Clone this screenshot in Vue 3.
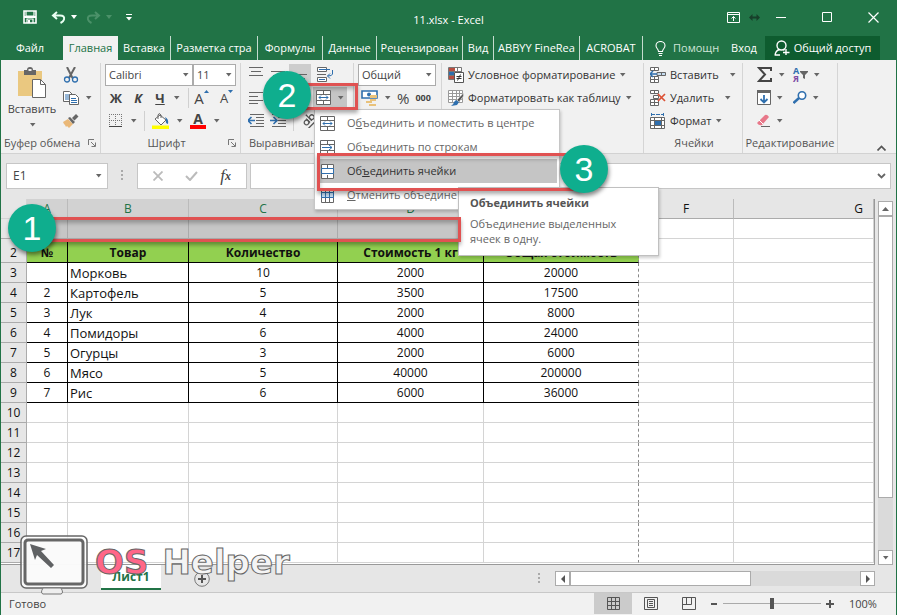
<script setup>
import { ref } from 'vue'

const tabs = ['Вставка', 'Разметка стра', 'Формулы', 'Данные', 'Рецензирован', 'Вид', 'ABBYY FineRea', 'ACROBAT']
const columns = ['A', 'B', 'C', 'D', 'E', 'F', 'G']
const goods = [
  ['', 'Морковь', '10', '2000', '20000'],
  ['2', 'Картофель', '5', '3500', '17500'],
  ['3', 'Лук', '4', '2000', '8000'],
  ['4', 'Помидоры', '6', '4000', '24000'],
  ['5', 'Огурцы', '3', '2000', '6000'],
  ['6', 'Мясо', '5', '40000', '200000'],
  ['7', 'Рис', '6', '6000', '36000']
]
const emptyRows = [10, 11, 12, 13, 14, 15, 16, 17]
const zoom = ref(50)
</script>

<template>
  <div class="window">
    <svg class="sprite" aria-hidden="true">
      <symbol id="arrow" viewBox="0 0 7 4"><path d="M1 0h5.500L3.700 3.500z" fill="#666" /></symbol>
      <symbol id="launcher" viewBox="0 0 8 8"><path d="M.5 6V.5H6M3 3l4 4M7.500 3.500v4h-4" fill="none" stroke="#777" /></symbol>
      <symbol id="merge-center" viewBox="0 0 16 15">
        <path d="M.5.5h14v14H.5zM.5 4.500h14M.5 10.500h14M7.500 0v4M7.500 11v4" fill="#fff" stroke="#666" />
        <path d="M3 7.500h9M5 5.500l-2 2 2 2M10 5.500l2 2-2 2" fill="none" stroke="#2f6fae" />
      </symbol>
      <symbol id="merge-across" viewBox="0 0 16 15">
        <path d="M.5.5h14v14H.5zM.5 4.500h14M.5 10.500h14M7.500 0v4M7.500 11v4" fill="#fff" stroke="#666" />
        <path d="M2 7.500h10M9 5l3 2.500L9 10" fill="none" stroke="#2f6fae" />
      </symbol>
      <symbol id="merge-cells" viewBox="0 0 16 15">
        <path d="M1.500.5h12v14h-12zM7.500 0v4M7.500 11v4" fill="#fff" stroke="#666" />
        <path d="M1.500 4.500h12v5h-12z" fill="#fff" stroke="#2f6fae" />
      </symbol>
      <symbol id="unmerge" viewBox="0 0 16 15">
        <path d="M1.500.5h12v14h-12zM5.500 0v15M9.500 0v15" fill="#fff" stroke="#666" />
        <path d="M1.500 4.500h12v5h-12zM5.500 4.500v5M9.500 4.500v5" fill="#c5dcf1" stroke="#2f6fae" />
      </symbol>
    </svg>

    <header class="titlebar">
      <div class="quick">
        <button aria-label="Сохранить"><svg width="14" height="14" viewBox="0 0 14 14"><path d="M1 1h12v12H1z" fill="none" stroke="#fff" stroke-width="1.600" /><path d="M3 1v5h8V1M4 13V9h6v4" fill="none" stroke="#fff" stroke-width="1.200" /><path d="M1 6h12v2H1zM5 10h2v3H5z" fill="#fff" /></svg></button>
        <button class="undo" aria-label="Отменить"><svg width="15" height="13" viewBox="0 0 15 13"><path d="M6 1L2 4.500 6 8M2 4.500h7q5 0 4 4-.5 2-3.500 3.500" fill="none" stroke="#e8fff2" stroke-width="2" /></svg><svg width="6" height="4" viewBox="0 0 6 4"><path d="M0 0h6L3 4z" fill="#fff" /></svg></button>
        <button class="redo" aria-label="Повторить"><svg width="15" height="13" viewBox="0 0 15 13"><path d="M9 1l4 3.500L9 8M13 4.500H6q-5 0-4 4Q2.500 10.500 5.500 12" fill="none" stroke="#4b9169" stroke-width="2" /></svg><svg width="6" height="4" viewBox="0 0 6 4"><path d="M0 0h6L3 4z" fill="#4b9169" /></svg></button>
        <button aria-label="Настройка панели"><svg width="6" height="7" viewBox="0 0 6 7"><path d="M0 0h6v1H0zM0 3h6L3 6.500z" fill="#fff" /></svg></button>
      </div>
      <h1>11.xlsx - Excel</h1>
      <div class="winctl">
        <button aria-label="Параметры ленты"><svg width="13" height="11" viewBox="0 0 13 11"><path d="M.5.5h12v10H.5zM.5 2.500h12M6.500 9V4.500M4.500 6.500l2-2 2 2" fill="none" stroke="#fff" /></svg></button>
        <svg width="11" height="7" viewBox="0 0 11 7"><path d="M0 3.500L3.500 0v2.500h4V0L11 3.500 7.500 7V4.500h-4V7z" fill="#173f2a" /></svg>
        <button aria-label="Свернуть"><svg width="10" height="10" viewBox="0 0 10 10"><path d="M0 5.500h10" stroke="#fff" /></svg></button>
        <button class="max" aria-label="Развернуть"><svg width="10" height="10" viewBox="0 0 10 10"><path d="M.5.5h9v9h-9z" fill="none" stroke="#fff" /></svg></button>
        <button class="close" aria-label="Закрыть"><svg width="11" height="11" viewBox="0 0 11 11"><path d="M.5.5l10 10M10.500.5l-10 10" stroke="#fff" stroke-width="1.200" /></svg></button>
      </div>
    </header>

    <nav class="tabs">
      <button class="file">Файл</button>
      <button class="active">Главная</button>
      <button v-for="t in tabs" :key="t" class="tab">{{ t }}</button>
      <button class="help"><svg width="11" height="15" viewBox="0 0 11 15"><path d="M3.500 10.500C3.500 8 1 7.500 1 4.800a4.500 4.300 0 0 1 9 0C10 7.500 7.500 8 7.500 10.500zM3.500 12.500h4M4 14.500h3" fill="none" stroke="#fff" stroke-width="1.100" /></svg><span>Помощн</span></button>
      <button class="login">Вход</button>
      <button class="share"><svg width="16" height="16" viewBox="0 0 16 16"><circle cx="7.500" cy="5.500" r="4.500" fill="none" stroke="#fff" stroke-width="1.400" /><path d="M1 15.500q.5-5 4.500-6M1 15h5M12 9v6M9 12.500h6.500M9 9.500l1.500.5" fill="none" stroke="#fff" stroke-width="1.400" /></svg>Общий доступ</button>
    </nav>

    <section class="ribbon">
      <div class="group clipboard">
        <div class="tools split">
          <button class="paste">
            <svg width="30" height="32" viewBox="0 0 30 32"><path d="M1 4h24v25H1z" fill="#eac880" /><path d="M7 3h3q0-3 3-3t3 3h3v5H7z" fill="#666" /><path d="M11.500 2h3v2h-3z" fill="#eee" /><path d="M15.500 12.500h8l5 5v13h-13z" fill="#fff" stroke="#666" /><path d="M23.500 12.500v5h5" fill="none" stroke="#666" /></svg>
            <span>Вставить</span>
            <svg class="arr"><use href="#arrow" /></svg>
          </button>
          <div class="stack">
            <button class="row" aria-label="Вырезать"><svg width="16" height="16" viewBox="0 0 16 16"><path d="M4 0l5.500 11M12 0L6 11" stroke="#666" stroke-width="2" /><circle cx="4" cy="12.500" r="2.500" fill="none" stroke="#2f6fae" stroke-width="1.300" /><circle cx="12" cy="12.500" r="2.500" fill="none" stroke="#2f6fae" stroke-width="1.300" /></svg></button>
            <button class="row" aria-label="Копировать"><svg width="16" height="14" viewBox="0 0 16 14"><path d="M.5.5h6l3 3v7h-9z" fill="#fff" stroke="#666" /><path d="M2 4h5M2 6h5M2 8h5" stroke="#2f6fae" /><path d="M6.500 3.500h6l3 3v7h-9z" fill="#fff" stroke="#666" /><path d="M8 7.500h5M8 9.500h6M8 11.500h6" stroke="#2f6fae" /></svg><svg class="arr"><use href="#arrow" /></svg></button>
            <button class="row" aria-label="Формат по образцу"><svg width="16" height="14" viewBox="0 0 16 14"><path d="M0 8l5-3 5 5-4 4-2-2-1 1-1-2-1-1z" fill="#eab878" /><path d="M5 4l2-1 5 5-2 2zM9 4l4-4 2.500 2.500-4 4z" fill="#666" /></svg></button>
          </div>
        </div>
        <footer><span>Буфер обмена</span><svg class="launch"><use href="#launcher" /></svg></footer>
      </div>

      <div class="group font">
        <div class="tools">
          <div class="row">
            <label class="combo face"><select aria-label="Шрифт"><option>Calibri</option></select><svg class="arr"><use href="#arrow" /></svg></label>
            <label class="combo size"><select aria-label="Размер"><option>11</option></select><svg class="arr"><use href="#arrow" /></svg></label>
          </div>
          <div class="row letters">
            <button class="b">Ж</button><button class="b i">К</button><button class="b u">Ч</button>
            <svg class="arr"><use href="#arrow" /></svg><i class="sep"></i>
            <button class="grow" aria-label="Увеличить">A<svg width="5" height="3" viewBox="0 0 5 3"><path d="M0 3h5L2.500 0z" fill="#2f6fae" /></svg></button>
            <button class="grow small" aria-label="Уменьшить">A<svg width="5" height="3" viewBox="0 0 5 3"><path d="M0 0h5L2.500 3z" fill="#2f6fae" /></svg></button>
          </div>
          <div class="row paint">
            <button aria-label="Границы"><svg width="14" height="13" viewBox="0 0 14 13"><path d="M.5 0v12M6.500 0v12M12.500 0v12M0 .5h13M0 6.500h13" stroke="#777" stroke-dasharray="1 1" /><path d="M0 12.500h13" stroke="#444" /></svg></button>
            <svg class="arr"><use href="#arrow" /></svg><i class="sep"></i>
            <button aria-label="Заливка"><svg width="17" height="16" viewBox="0 0 17 16"><path d="M3 6l5-4 6 5-5 5z" fill="#fff" stroke="#666" /><path d="M6 6V2q1-3 3 0v3" fill="none" stroke="#666" /><path d="M13 4q4 2 3 7-3-1-2-4z" fill="#2f6fae" /><path d="M0 12.500h17V16H0z" fill="#ff0" /></svg></button>
            <svg class="arr"><use href="#arrow" /></svg>
            <button class="color" aria-label="Цвет текста">А</button>
            <svg class="arr"><use href="#arrow" /></svg>
          </div>
        </div>
        <footer><span class="mid">Шрифт</span><svg class="launch"><use href="#launcher" /></svg></footer>
      </div>

      <div class="group align">
        <div class="tools">
          <div class="row">
            <button aria-label="По верхнему краю"><svg width="14" height="16" viewBox="0 0 14 16"><path d="M0 .5h14M2 4.500h10M0 8.500h14" stroke="#666" /></svg></button>
            <button aria-label="По середине"><svg width="14" height="16" viewBox="0 0 14 16"><path d="M0 4.500h14M2 8.500h10M0 12.500h14" stroke="#666" /></svg></button>
            <button class="on" aria-label="По нижнему краю"><svg width="14" height="16" viewBox="0 0 14 16"><path d="M0 7.500h14M2 11.500h10M0 15.500h14" stroke="#666" /></svg></button>
            <button aria-label="Перенос текста"><svg width="17" height="16" viewBox="0 0 17 16"><path d="M.5.5h9v4h-9zM.5 10.500h9v4h-9zM0 7.500h9" fill="#fff" stroke="#666" /><path d="M2 2.500h11M2 12.500h6M15.500 3v4q0 2-5 2M13 6.500L10.500 9l2.500 2.500" fill="none" stroke="#2f6fae" /></svg></button>
          </div>
          <div class="row">
            <button aria-label="По левому краю"><svg width="14" height="12" viewBox="0 0 14 12"><path d="M0 .5h14M0 4.500h9M0 8.500h14M0 11.500h9" stroke="#666" /></svg></button>
            <button aria-label="По центру"><svg width="14" height="12" viewBox="0 0 14 12"><path d="M0 .5h14M2 4.500h10M0 8.500h14" stroke="#666" /></svg></button>
            <button aria-label="По правому краю"><svg width="14" height="12" viewBox="0 0 14 12"><path d="M0 .5h14M5 4.500h9M0 8.500h14" stroke="#666" /></svg></button>
            <button class="merge" aria-label="Объединить"><svg width="16" height="15"><use href="#merge-center" /></svg><svg class="arr"><use href="#arrow" /></svg></button>
          </div>
          <div class="row">
            <button aria-label="Уменьшить отступ"><svg width="16" height="13" viewBox="0 0 16 13"><path d="M2 .5h14M8 3.500h8M8 6.500h8M8 9.500h8M2 12.500h14" stroke="#666" /><path d="M0 6.500h7M3.500 3L0 6.500 3.500 10" fill="none" stroke="#2f6fae" stroke-width="1.600" /></svg></button>
            <button aria-label="Увеличить отступ"><svg width="16" height="13" viewBox="0 0 16 13"><path d="M2 .5h14M8 3.500h8M8 6.500h8M8 9.500h8M2 12.500h14" stroke="#666" /><path d="M0 6.500h6M3.500 3L7 6.500 3.500 10" fill="none" stroke="#2f6fae" stroke-width="1.600" /></svg></button>
            <i class="sep"></i>
            <button class="orient" aria-label="Ориентация"><svg width="15" height="15" viewBox="0 0 15 15"><g transform="rotate(-45 7 7)" fill="none" stroke="#555" stroke-width="1.300"><circle cx="3.500" cy="7" r="2.300" /><path d="M6 4v5.500M8.500 1v8.500M0 12.500h14" /><circle cx="11" cy="7" r="2.300" /></g></svg></button>
          </div>
        </div>
        <footer><span>Выравнивание</span></footer>
      </div>

      <div class="group number">
        <div class="tools">
          <div class="row"><label class="combo fmt"><select aria-label="Формат числа"><option>Общий</option></select><svg class="arr"><use href="#arrow" /></svg></label></div>
          <div class="row">
            <button aria-label="Денежный формат"><svg width="17" height="16" viewBox="0 0 17 16"><path d="M1 1h15v7H1z" fill="#fff" stroke="#2f6fae" stroke-width="1.600" /><circle cx="8" cy="4.500" r="2" fill="#2f6fae" /><path d="M9 5h7v3H9zM9 9h6v2H9zM5 11h6v2H5zM8 14h7v2H8z" fill="#e9c27b" /></svg></button>
            <svg class="arr"><use href="#arrow" /></svg>
            <button class="pct">%</button><button class="zeros">000</button>
          </div>
        </div>
      </div>

      <div class="group styles">
        <div class="tools">
          <button class="row cmd"><svg width="16" height="16" viewBox="0 0 16 16"><path d="M.5.5h13v12H.5zM.5 4.500h13M.5 8.500h13M9.500.5v12" fill="#fff" stroke="#777" /><path d="M1 1h6v3H1zM1 9h5v3H1z" fill="#b94f42" /><path d="M1 5h5v3H1z" fill="#2f6fae" /><path d="M6.500 5.500h9v10h-9z" fill="#fff" stroke="#555" /><path d="M8.500 9.500h5M8.500 11.500h5M12.500 7.500l-3 6" stroke="#333" /></svg>Условное форматирование<svg class="arr"><use href="#arrow" /></svg></button>
          <button class="row cmd"><svg width="16" height="16" viewBox="0 0 16 16"><path d="M.5.5h14v12H.5zM.5 3.500h14M.5 6.500h14M.5 9.500h14M4.500.5v12M8.500.5v12M11.500.5v12" fill="#fff" stroke="#999" /><path d="M15.500 3L9 10l2 2 4.500-6z" fill="#555" stroke="#f1f1f1" stroke-width=".5" /><path d="M8 10l3 2-2 3-6 1q3-2 3-4z" fill="#2f6fae" /></svg>Форматировать как таблицу<svg class="arr"><use href="#arrow" /></svg></button>
        </div>
      </div>

      <div class="group cells">
        <div class="tools">
          <button class="row cmd"><svg width="16" height="16" viewBox="0 0 16 16"><path d="M.5.5h8v3h-8zM.5 12.500h8v3h-8zM.5 9.500h8v3h-8zM4.500 0v4M4.500 9v7" fill="#fff" stroke="#666" /><path d="M7 5.500h8.500v3H7zM11.500 5.500v3" fill="#c5dcf1" stroke="#666" /><path d="M0 7h7M3 4L0 7l3 3" fill="none" stroke="#2f6fae" stroke-width="1.500" /></svg>Вставить<svg class="arr far"><use href="#arrow" /></svg></button>
          <button class="row cmd"><svg width="16" height="16" viewBox="0 0 16 16"><path d="M.5.5h8v3h-8zM.5 9.500h8v6h-8zM.5 12.500h8M4.500 0v4M4.500 9v7M3.500 5.500h5v3h-5z" fill="#fff" stroke="#666" /><path d="M8 4l7 7M15 4l-7 7" stroke="#dc5135" stroke-width="1.700" /></svg>Удалить<svg class="arr far"><use href="#arrow" /></svg></button>
          <button class="row cmd"><svg width="16" height="16" viewBox="0 0 16 16"><path d="M.5 4.500h14v11H.5zM.5 7.500h14M.5 12.500h14M4.500 4v12M11.500 4v12" fill="#fff" stroke="#666" /><path d="M5 8h6v4H5z" fill="#2f6fae" /><path d="M1 1.500h13M1.500 0v3M13.500 0v3" stroke="#2f6fae" stroke-dasharray="4 1" /></svg>Формат<svg class="arr"><use href="#arrow" /></svg></button>
        </div>
        <footer><span class="mid">Ячейки</span></footer>
      </div>

      <div class="group edit">
        <div class="tools">
          <div class="row">
            <button aria-label="Сумма"><svg width="16" height="15" viewBox="0 0 16 15"><path d="M14 4V1H2l6 6.500L2 14h12v-3" fill="none" stroke="#444" stroke-width="2" /></svg><svg class="arr"><use href="#arrow" /></svg></button>
            <button aria-label="Сортировка" class="sort"><span><b>А</b><b>Я</b></span><svg width="8" height="8" viewBox="0 0 8 8"><path d="M0 0h8v1L5 4v4L3 7V4L0 1z" fill="#666" /></svg><svg class="arr"><use href="#arrow" /></svg></button>
          </div>
          <div class="row">
            <button aria-label="Заполнить"><svg width="14" height="15" viewBox="0 0 14 15"><path d="M.5.5h13v14H.5z" fill="#fff" stroke="#666" /><path d="M0 0h14v3H0z" fill="#666" /><path d="M7 5v7M3.500 9L7 12.500 10.500 9" fill="none" stroke="#2f6fae" stroke-width="1.800" /></svg><svg class="arr"><use href="#arrow" /></svg></button>
            <button aria-label="Найти"><svg width="14" height="13" viewBox="0 0 14 13"><circle cx="9" cy="4.500" r="3.700" fill="#fff" stroke="#2f6fae" stroke-width="1.600" /><path d="M6 7L.5 12" stroke="#2f6fae" stroke-width="2.400" /></svg><svg class="arr"><use href="#arrow" /></svg></button>
          </div>
          <div class="row">
            <button aria-label="Очистить"><svg width="14" height="13" viewBox="0 0 14 13"><path d="M0 9l8-8q2-1 4 2l-7 8q-3 1-5-2z" fill="#e8788a" /><path d="M2 6l4 4" stroke="#fff" /><path d="M4 12.500h9" stroke="#666" /></svg><svg class="arr"><use href="#arrow" /></svg></button>
          </div>
        </div>
        <footer><span class="mid">Редактирование</span></footer>
      </div>
      <div class="collapse"><button aria-label="Свернуть ленту"><svg width="9" height="6" viewBox="0 0 9 6"><path d="M.5 5.500l4-4 4 4" fill="none" stroke="#555" stroke-width="1.700" /></svg></button></div>
    </section>

    <section class="formula">
      <label class="name"><input aria-label="Имя ячейки" value="E1" /><svg class="arr"><use href="#arrow" /></svg></label>
      <svg class="dots" width="3" height="12" viewBox="0 0 3 12"><path d="M0 0h2v2H0zM0 4h2v2H0zM0 8h2v2H0z" fill="#aaa" /></svg>
      <div class="fx">
        <button aria-label="Отмена"><svg width="10" height="10" viewBox="0 0 10 10"><path d="M.5.5l9 9M9.500.5l-9 9" stroke="#bbb" stroke-width="1.800" /></svg></button>
        <button aria-label="Ввод"><svg width="13" height="10" viewBox="0 0 13 10"><path d="M1 5l4 4 7-8" fill="none" stroke="#bbb" stroke-width="2" /></svg></button>
        <button class="fn"><i>f</i><sub>x</sub></button>
      </div>
      <label class="entry"><input aria-label="Строка формул" value="" /><svg width="9" height="6" viewBox="0 0 9 6"><path d="M1 1l3.500 3.500L8 1" fill="none" stroke="#666" stroke-width="1.800" /></svg></label>
    </section>

    <main class="sheet">
      <div class="gridwrap">
        <table class="grid">
          <colgroup><col class="ch" /><col class="ca" /><col class="cb" /><col class="cc" /><col class="cd" /><col class="ce" /><col class="cf" /><col /></colgroup>
          <thead>
            <tr><td class="corner"></td><th v-for="(c, i) in columns" :key="c" :class="{ sel: i < 5, last: i === 6 }">{{ c }}</th></tr>
          </thead>
          <tbody>
            <tr class="picked"><th class="sel"></th><td v-for="c in columns" :key="c"></td></tr>
            <tr class="head"><th>2</th><td>№</td><td>Товар</td><td>Количество</td><td>Стоимость 1 кг</td><td>Общая стоимость</td><td></td><td></td></tr>
            <tr v-for="(g, i) in goods" :key="g[1]" class="data"><th>{{ i + 3 }}</th><td v-for="(v, k) in g" :key="k">{{ v }}</td><td></td><td></td></tr>
            <tr v-for="r in emptyRows" :key="r"><th>{{ r }}</th><td v-for="c in columns" :key="c"></td></tr>
          </tbody>
        </table>
      </div>
      <div class="vscroll">
        <button aria-label="Вверх"><svg width="7" height="4" viewBox="0 0 7 4"><path d="M0 4h7L3.500 0z" fill="#666" /></svg></button>
        <i class="thumb"></i><i class="track"></i>
        <button aria-label="Вниз"><svg class="arr"><use href="#arrow" /></svg></button>
      </div>
    </main>

    <section class="sheetbar">
      <button class="sheettab">Лист1</button>
      <button class="add" aria-label="Новый лист"><svg width="16" height="16" viewBox="0 0 16 16"><circle cx="8" cy="8" r="7.300" fill="none" stroke="#777" /><path d="M4 8h8M8 4v8" stroke="#555" stroke-width="2" /></svg></button>
      <svg class="dots" width="3" height="12" viewBox="0 0 3 12"><path d="M0 0h2v2H0zM0 4h2v2H0zM0 8h2v2H0z" fill="#aaa" /></svg>
      <div class="hscroll">
        <button aria-label="Влево"><svg width="4" height="8" viewBox="0 0 4 8"><path d="M4 0v8L0 4z" fill="#555" /></svg></button>
        <i class="thumb"></i><i class="track"></i>
        <button aria-label="Вправо"><svg width="4" height="8" viewBox="0 0 4 8"><path d="M0 0v8l4-4z" fill="#555" /></svg></button>
      </div>
    </section>

    <footer class="status">
      <span class="ready">Готово</span>
      <button class="view on" aria-label="Обычный"><svg width="13" height="13" viewBox="0 0 13 13"><path d="M.5.5h12v12H.5zM.5 4.500h12M.5 8.500h12M4.500.5v12M8.500.5v12" fill="none" stroke="#555" /></svg></button>
      <button class="view" aria-label="Разметка страницы"><svg width="14" height="13" viewBox="0 0 14 13"><path d="M.5.5h13v12H.5zM3.500 2.500h7v8h-7zM5 4.500h4M5 6.500h4M5 8.500h4" fill="none" stroke="#555" /></svg></button>
      <button class="view" aria-label="Страничный"><svg width="14" height="13" viewBox="0 0 14 13"><path d="M.5.5h13v12H.5zM4.500.5v7M9.500.5v7M.5 7.500h9" fill="none" stroke="#555" /></svg></button>
      <button class="step" aria-label="Мельче"><svg width="8" height="8" viewBox="0 0 8 8"><path d="M1 4h6" stroke="#555" stroke-width="2" /></svg></button>
      <input v-model="zoom" class="zoom" type="range" min="0" max="100" aria-label="Масштаб" />
      <button class="step" aria-label="Крупнее"><svg width="8" height="8" viewBox="0 0 8 8"><path d="M0 4h8M4 0v8" stroke="#555" stroke-width="2" /></svg></button>
      <span class="percent">100%</span>
    </footer>

    <!-- Drop-down menu, tooltip and callouts float above the window -->
    <ul class="menu">
      <li><button><svg width="16" height="15"><use href="#merge-center" /></svg><span>О<u>б</u>ъединить и поместить в центре</span></button></li>
      <li><button><svg width="16" height="15"><use href="#merge-across" /></svg><span>Объе<u>д</u>инить по строкам</span></button></li>
      <li><button class="hover"><svg width="16" height="15"><use href="#merge-cells" /></svg><span>Об<u>ъ</u>единить ячейки</span></button></li>
      <li><button><svg width="16" height="15"><use href="#unmerge" /></svg><span><u>О</u>тменить объедине</span></button></li>
    </ul>
    <div class="tip"><strong>Объединить ячейки</strong><p>Объединение выделенных ячеек в одну.</p></div>
    <div class="mark m1"></div>
    <div class="mark m2"></div>
    <div class="mark m3"></div>
    <b class="ball b1">1</b>
    <b class="ball b2">2</b>
    <b class="ball b3">3</b>

    <div class="brand">
      <svg width="68" height="60" viewBox="0 0 68 60"><rect x="1" y="1" width="66" height="52" rx="5" fill="#fff" fill-opacity=".8" stroke="#666" stroke-width="1.500" /><rect x="5" y="5" width="58" height="44" rx="3" fill="#fafafa" fill-opacity=".9" stroke="#666" stroke-width="3" /><path d="M10 9l16 5-5 2 13 14-3 3-14-13-2 5z" fill="#5f6163" /><path d="M23 53h18q3 5 0 6H23q-3-1 0-6z" fill="#eee" stroke="#777" /></svg>
      <span class="os">OS</span><span class="helper">Helper</span>
    </div>
  </div>
</template>

<style>
body { background: #217346; }
</style>

<style scoped>
.window { position: relative; display: flex; flex-direction: column; min-height: 100vh; box-sizing: border-box; border: 1px solid #217346; background: #e6e6e6; font: 12px/16px "Open Sans", "Noto Sans", sans-serif; color: #444; overflow: hidden; }
.window *, .window *::after { box-sizing: border-box; }
button { border: 0; padding: 0; margin: 0; background: none; font: inherit; color: inherit; display: flex; align-items: center; justify-content: center; white-space: nowrap; }
svg { flex: none; display: block; }
.sprite { position: absolute; width: 0; height: 0; }
.arr { width: 7px; height: 4px; }
.sep { width: 1px; height: 20px; background: #d0d0d0; }

.titlebar { height: 35px; background: #217346; color: #fff; display: grid; grid-template-columns: 1fr auto 1fr; align-items: center; padding-bottom: 3px; }
.titlebar h1 { margin: 6px 0 0; font-size: 11px; font-weight: 400; }
.quick { display: flex; align-items: center; gap: 14px; padding-left: 22px; }
.undo, .redo { gap: 5px; }
.redo { margin-left: -5px; }
.winctl { display: flex; align-items: center; justify-content: flex-end; gap: 9px; padding-right: 17px; }
.winctl > button:nth-of-type(2) { margin-left: 7px; }
.max { margin-left: 27px; }
.close { margin-left: 27px; }

.tabs { height: 24px; background: #217346; color: #fff; display: grid; grid-template-columns: 62px 55px 53px 87px 65px 54px 86px 31px 86px 63px 80px 42px 115px; }
.tabs button { overflow: hidden; font-size: 11px; }
.file { padding-right: 4px; }
.tabs .active { background: #f1f1f1; color: #217346; }
.tabs .tab { border-right: 1px solid #c5dccf; justify-content: center; }
.tabs .help { justify-content: flex-start; gap: 7px; padding-left: 12px; color: #cfe5d8; }
.tabs .share { background: #0e5c2f; gap: 4px; }

.ribbon { height: 94px; background: #f1f1f1; border-bottom: 1px solid #d2d2d2; display: grid; grid-template-columns: 100px 140px 113px 88px 202px 99px 95px 1fr; padding-top: 3px; font-size: 11px; }
.group { border-right: 1px solid #d5d5d5; display: flex; flex-direction: column; margin-bottom: 4px; padding-left: 4px; min-width: 0; }
.tools { height: 69px; }
.split { display: flex; gap: 3px; }
.row { height: 23px; display: flex; align-items: center; justify-content: flex-start; }
.group footer { height: 21px; display: flex; align-items: center; justify-content: space-between; padding-right: 4px; color: #555; white-space: nowrap; }
.launch { width: 8px; height: 8px; }
.mid { flex: 1; text-align: center; }
.clipboard { padding-left: 3px; }
.paste { flex-direction: column; justify-content: flex-start; width: 56px; padding-top: 4px; }
.paste .arr { margin-top: 6px; }
.paste span { margin-top: 2px; }
.stack .row { gap: 6px; }
.combo { display: grid; align-items: center; height: 22px; background: #fff; border: 1px solid #ababab; }
.combo select, .combo .arr { grid-area: 1 / 1; }
.combo select { appearance: none; border: 0; background: none; width: 100%; height: 20px; padding: 0 3px; font: inherit; color: #444; }
.combo .arr, .name .arr { justify-self: end; margin-right: 3px; pointer-events: none; }
.face { width: 88px; }
.size { width: 43px; }
.fmt { width: 78px; }
.letters .b { width: 22px; font-weight: 700; font-size: 13px; }
.letters .i { font-style: italic; }
.letters .u { text-decoration: underline; }
.letters .arr { margin: 0 8px 0 2px; }
.grow { width: 25px; font-size: 15px; align-items: flex-start; }
.small { font-size: 13px; }
.paint { gap: 7px; padding-left: 4px; }
.color { width: 16px; height: 17px; border-bottom: 4px solid red; font-weight: 700; font-size: 14px; line-height: 13px; }
.align .row button { width: 22px; height: 22px; }
.align .row .on { background: #cdcdcd; margin-right: 3px; }
.align .row .merge { width: 34px; height: 21px; background: #c5c5c5; gap: 5px; margin-left: 2px; }
.align footer { padding-left: 4px; }
.align .sep { margin: 0 4px; }
.number .row:nth-child(2) { gap: 6px; padding-left: 3px; }
.pct { font-size: 15px; }
.zeros { font-size: 9px; font-weight: 700; }
.styles, .cells { padding-left: 6px; }
.cmd { gap: 4px; color: #333; }
.far { margin-left: 6px; }
.edit .row { padding-left: 12px; gap: 8px; }
.edit button { gap: 5px; }
.edit .row button:first-child { width: 28px; justify-content: flex-start; }
.sort span { display: flex; flex-direction: column; font-size: 9px; line-height: 8px; color: #2f6fae; }
.sort b + b { color: #7d4ba5; }
.edit .sort { gap: 1px; }
.edit .sort .arr { margin-left: 4px; }
.edit footer { padding-right: 2px; }
.edit { padding-left: 2px; }
.collapse { display: flex; align-items: flex-end; justify-content: flex-end; padding: 0 10px 6px 0; }

.formula { display: flex; align-items: center; padding: 9px 5px 10px; }
.name, .fx, .entry { height: 26px; background: #fff; border: 1px solid #c6c6c6; display: flex; align-items: center; }
.name { width: 102px; padding: 0 2px 0 6px; }
.name input, .entry input { flex: 1; min-width: 0; border: 0; padding: 0; background: none; font: inherit; color: #444; }
.formula .dots { margin: 0 13px; }
.fx { width: 110px; justify-content: space-around; padding: 0 4px; margin-right: 3px; }
.fn { font: italic 17px/20px "Liberation Serif", serif; color: #444; }
.fn sub { font-size: 12px; font-weight: 700; }
.entry { flex: 1; padding-right: 4px; }

.sheet { flex: 1; display: flex; gap: 3px; padding-right: 3px; min-height: 366px; }
.gridwrap { flex: 1; min-width: 0; border-right: 1px solid #999; border-bottom: 1px solid #999; background: #fff; }
.grid { width: 100%; table-layout: fixed; border-collapse: separate; border-spacing: 0; color: #111; font-size: 13px; line-height: 16px; }
.ch { width: 26px; } .ca { width: 41px; } .cb { width: 121px; } .cc { width: 149px; } .cd { width: 146px; } .ce { width: 155px; } .cf { width: 95px; }
.grid td, .grid th { height: 20px; padding: 0; text-align: center; overflow: hidden; white-space: nowrap; border-right: 1px solid #d4d4d4; border-bottom: 1px solid #d4d4d4; }
.grid td { font-size: 12px; }
.grid .data td:nth-child(3) { font-size: 13px; }
.grid th { background: #e6e6e6; font-weight: 400; border-color: #ababab; font-size: 12px; }
.grid thead th { border-right-color: #bbb; }
.grid .corner { background: #e6e6e6; }
.grid thead .sel { background: #d2d2d2; color: #217346; }
.grid .last { text-align: right; padding-right: 10px; }
.grid td:nth-child(6) { border-right: 1px dashed #888; }
.picked td:nth-child(-n+6) { background: #c6c6c6; border-color: #aaa; }
.grid .head td, .grid .head th { height: 24px; padding-top: 4px; }
.head td:nth-child(-n+6) { background: #92d050; font-weight: 700; }
.head td:nth-child(-n+6), .data td:nth-child(-n+6) { border-bottom-color: #000; }
.head td:nth-child(-n+5), .data td:nth-child(-n+5) { border-right-color: #000; }
.data td:nth-child(3) { text-align: left; padding-left: 2px; }
.vscroll { width: 15px; display: flex; flex-direction: column; padding-top: 2px; }
.vscroll button { height: 15px; background: #fff; border: 1px solid #ababab; }
.vscroll .thumb { height: 282px; background: #fff; border: 1px solid #ababab; }
.track { flex: 1; background: #dadada; }

.sheetbar { height: 28px; display: flex; align-items: center; border-bottom: 1px solid #c8c8c8; padding: 0 21px 0 100px; }
.sheettab { align-self: flex-start; width: 60px; height: 25px; background: #fff; border-bottom: 2px solid #217346; color: #217346; font-weight: 700; }
.add { margin: 0 auto 0 33px; }
.sheetbar .dots { margin-right: 14px; }
.hscroll { width: 320px; height: 15px; display: flex; }
.hscroll button { width: 15px; background: #fff; border: 1px solid #ababab; }
.hscroll .thumb { width: 181px; background: #fff; border: 1px solid #ababab; }

.status { height: 22px; background: #f1f1f1; display: flex; align-items: center; font-size: 11px; padding: 0 17px 1px 0; }
.ready { flex: 1; padding-left: 8px; }
.view { width: 38px; height: 21px; }
.view.on { background: #cbcbcb; }
.step { width: 12px; }
.zoom { appearance: none; width: 98px; height: 12px; margin: 0 3px; background: linear-gradient(#aaa, #aaa) center / 100% 1px no-repeat; }
.zoom::-webkit-slider-thumb { appearance: none; width: 4px; height: 11px; background: #555; }
.percent { margin-left: 13px; width: 30px; }

.menu { position: absolute; left: 313px; top: 108px; width: 246px; margin: 0; padding: 1px 2px 2px; list-style: none; background: #fff; border: 1px solid #c6c6c6; box-shadow: 1px 2px 3px #0003; color: #666; font-size: 11px; }
.menu button { width: 100%; height: 24px; justify-content: flex-start; gap: 11px; padding-left: 3px; }
.menu .hover { background: #c5c5c5; color: #333; }
.mark { position: absolute; border: 3px solid #e05252; box-shadow: 0 3px 4px #0005, inset 0 3px 4px #0004; }
.m1 { left: 30px; top: 216px; width: 430px; height: 25px; }
.m2 { left: 300px; top: 82px; width: 57px; height: 27px; }
.m3 { left: 316px; top: 152px; width: 265px; height: 38px; }
.tip { position: absolute; left: 457px; top: 186px; width: 201px; min-height: 69px; background: #fff; border: 1px solid #c0c0c0; box-shadow: 1px 2px 3px #0003; padding: 7px 11px; color: #666; font-size: 11px; }
.tip strong { color: #555; }
.tip p { margin: 5px 0 0; line-height: 15px; }
.ball { position: absolute; width: 48px; height: 48px; border-radius: 50%; background: #0fae8e; color: #fff; display: grid; place-items: center; font: 400 34px/34px "Liberation Sans", sans-serif; box-shadow: 1px 3px 4px #0007; }
.b1 { left: 7px; top: 203px; }
.b2 { left: 262px; top: 70px; }
.b3 { left: 559px; top: 144px; }
.brand { position: absolute; left: 19px; top: 534px; display: flex; align-items: flex-start; pointer-events: none; font: 700 34px/54px "DejaVu Sans", sans-serif; -webkit-text-stroke: 1px #666; }
.os { margin-left: 7px; color: #ff6688; }
.helper { margin-left: 14px; color: #f4f4f4; }
</style>
